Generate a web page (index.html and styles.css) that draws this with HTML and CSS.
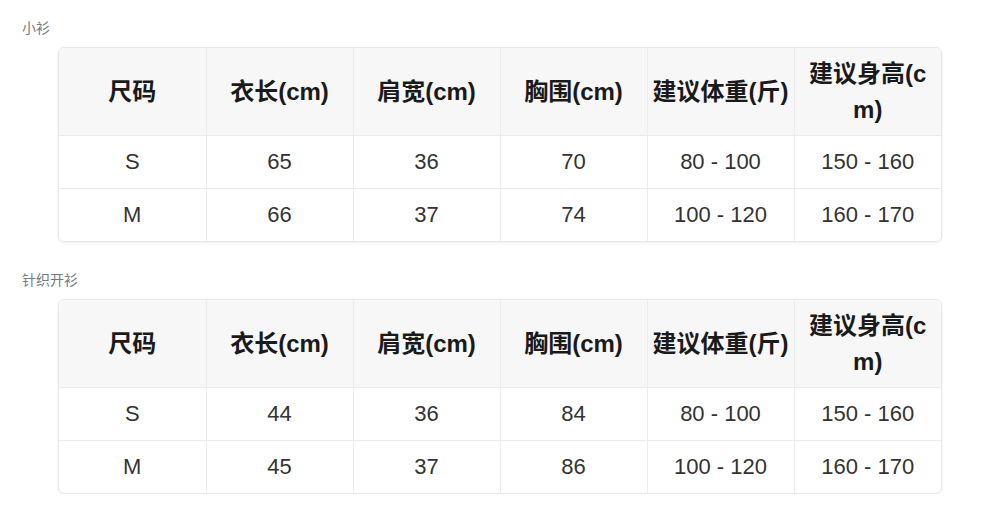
FILE: index.html
```html
<!DOCTYPE html>
<html lang="zh">
<head>
<meta charset="utf-8">
<title>尺码表</title>
<link rel="stylesheet" href="styles.css">
</head>
<body>
<div class="page">
  <section class="block">
    <div class="label">小衫</div>
    <div class="table-wrap">
      <table class="size-table">
        <thead>
          <tr><th>尺码</th><th>衣长(cm)</th><th>肩宽(cm)</th><th>胸围(cm)</th><th>建议体重(斤)</th><th>建议身高(cm)</th></tr>
        </thead>
        <tbody>
          <tr><td>S</td><td>65</td><td>36</td><td>70</td><td>80 - 100</td><td>150 - 160</td></tr>
          <tr><td>M</td><td>66</td><td>37</td><td>74</td><td>100 - 120</td><td>160 - 170</td></tr>
        </tbody>
      </table>
    </div>
  </section>
  <section class="block">
    <div class="label">针织开衫</div>
    <div class="table-wrap">
      <table class="size-table">
        <thead>
          <tr><th>尺码</th><th>衣长(cm)</th><th>肩宽(cm)</th><th>胸围(cm)</th><th>建议体重(斤)</th><th>建议身高(cm)</th></tr>
        </thead>
        <tbody>
          <tr><td>S</td><td>44</td><td>36</td><td>84</td><td>80 - 100</td><td>150 - 160</td></tr>
          <tr><td>M</td><td>45</td><td>37</td><td>86</td><td>100 - 120</td><td>160 - 170</td></tr>
        </tbody>
      </table>
    </div>
  </section>
</div>
</body>
</html>
```

FILE: styles.css
```css
* { box-sizing: border-box; }
html, body { margin: 0; padding: 0; background: #fff; }
body { font-family: "Liberation Sans", "Noto Sans CJK SC", sans-serif; }

.page {
  padding: 18px 0 0 22px;
  display: flex;
  flex-direction: column;
  gap: 28px;
}

.label {
  font-size: 14px;
  line-height: 20px;
  color: #737a86;
  margin-bottom: 9px;
}

.table-wrap {
  margin-left: 36px;
  width: 884px;
  border: 1px solid #e6e7e9;
  border-radius: 6px;
  overflow: hidden;
  box-shadow: 0 1px 3px rgba(0, 0, 0, 0.07);
}

.size-table {
  width: 100%;
  border-collapse: collapse;
  table-layout: fixed;
}

.size-table th,
.size-table td {
  text-align: center;
  vertical-align: middle;
  border-right: 1px solid #ebecee;
  border-bottom: 1px solid #ebecee;
  word-break: break-all;
}

.size-table tr > :last-child { border-right: none; }

.size-table th {
  background: #f7f7f7;
  font-size: 24px;
  line-height: 36px;
  font-weight: bold;
  color: #1a1a1a;
  padding: 8px 4px 7px;
}

.size-table td {
  font-size: 22px;
  line-height: 30px;
  color: #333;
  height: 53px;
  padding: 11px 4px;
}

.size-table tbody tr:last-child td {
  border-bottom: none;
  height: 52px;
  padding: 11px 4px 11px;
}
```
